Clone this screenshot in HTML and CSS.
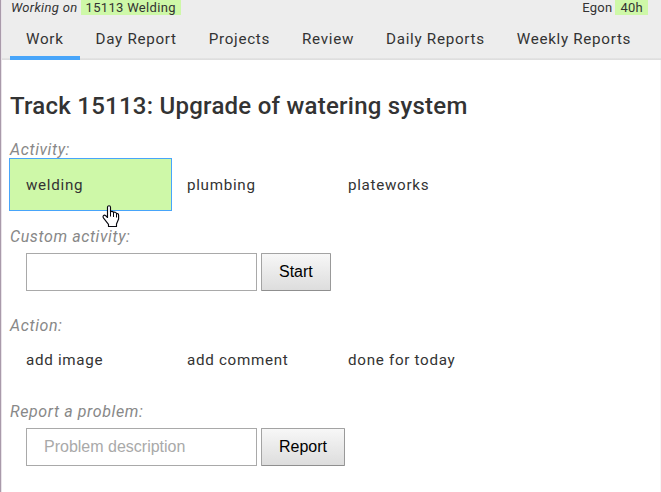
FILE: index.html
```html
<!DOCTYPE html>
<html lang="en">
<head>
<meta charset="utf-8">
<title>Track 15113</title>
<link rel="stylesheet" href="styles.css">
</head>
<body>
<div class="app">
  <header class="header">
    <div class="status">
      <div><em>Working on</em><span class="tag">15113 Welding</span></div>
      <div class="user">Egon<span class="tag">40h</span></div>
    </div>
    <nav class="tabs">
      <a class="tab active">Work</a>
      <a class="tab">Day Report</a>
      <a class="tab">Projects</a>
      <a class="tab">Review</a>
      <a class="tab">Daily Reports</a>
      <a class="tab">Weekly Reports</a>
    </nav>
  </header>
  <main class="content">
    <h1>Track 15113: Upgrade of watering system</h1>
    <section class="group activity">
      <h2>Activity:</h2>
      <div class="options">
        <a class="option selected">welding
          <svg class="cursor" width="18" height="23" viewBox="0 0 18 23">
            <path d="M5.5 12.5V2.2C5.500 .2 8.500 .2 8.500 2.200V7C9 5.900 11.400 6.200 11.500 7.600C12.300 6.800 14.300 7.300 14.500 8.700C15.500 8.100 16.600 8.900 16.600 10.200V14L14.500 19V21.500H6.500V19.300L1.600 13.200C.2 11.200 2 9.400 3.700 10.700Z" fill="#fff" stroke="#08080f" stroke-width="1.150" stroke-linejoin="round"/>
            <path d="M8.500 7V11.500M11.500 7.600V12M14.500 8.700V12.500" fill="none" stroke="#08080f"/>
          </svg>
        </a>
        <a class="option">plumbing</a>
        <a class="option">plateworks</a>
      </div>
    </section>
    <section class="group custom">
      <h2>Custom activity:</h2>
      <div class="form"><input type="text" aria-label="Custom activity"><button>Start</button></div>
    </section>
    <section class="group action">
      <h2>Action:</h2>
      <div class="options">
        <a class="option">add image</a>
        <a class="option">add comment</a>
        <a class="option">done for today</a>
      </div>
    </section>
    <section class="group problem">
      <h2>Report a problem:</h2>
      <div class="form"><input type="text" placeholder="Problem description"><button>Report</button></div>
    </section>
  </main>
</div>
</body>
</html>
```
FILE: styles.css
```css
* { box-sizing: border-box; }

body {
  margin: 0;
  background: #fff;
  color: #333;
  font-family: Roboto, "Liberation Sans", sans-serif;
}

.app {
  height: 492px;
  overflow: hidden;
  border-left: 1px solid #a99aaa;
  box-shadow: inset 1px 0 #e9e4e9, inset -1px 0 #f7f7f7;
}

.header {
  height: 60px;
  margin-left: 1px;
  padding-left: 8px;
  background: linear-gradient(#ededed 58px, #e5e5e5 58px, #dcdcdc);
}

.status {
  display: flex;
  justify-content: space-between;
  height: 18px;
  padding: 0 13px 0 1px;
  font-size: 13px;
  line-height: 15px;
  letter-spacing: 0.32px;
}

.tag {
  display: inline-block;
  height: 15px;
  margin-left: 3px;
  padding: 0 5px;
  background: #cef8a8;
}

.user { letter-spacing: 0.25px; }

.tabs { display: flex; }

.tab {
  height: 42px;
  padding: 0 16px;
  border-bottom: 4px solid transparent;
  font-size: 15.2px;
  line-height: 42px;
  letter-spacing: 0.7px;
  white-space: nowrap;
}

.tab.active { border-color: #48a5fa; }

.content { padding-left: 9px; }

h1 {
  height: 80px;
  margin: 0;
  padding-top: 31px;
  font-size: 24px;
  font-weight: 500;
  line-height: 30px;
  letter-spacing: 0.25px;
}

h2 {
  height: 18px;
  margin: 0;
  color: #888;
  font-size: 16px;
  font-style: italic;
  font-weight: 400;
  line-height: 19px;
  letter-spacing: 0.6px;
}

.activity { height: 87px; }
.custom { height: 89px; }
.action { height: 86px; }

.activity h2 { line-height: 20px; }

.options {
  display: grid;
  grid-template-columns: repeat(3, 161px);
  padding-top: 1px;
}

.action .options { padding-top: 0; }

.option {
  position: relative;
  height: 51px;
  padding-left: 16px;
  font-size: 15.2px;
  line-height: 52px;
  letter-spacing: 0.7px;
}

.option.selected {
  height: 53px;
  margin: -1px;
  border: 1px solid #48a5fa;
  background: #cef8a8;
}

.cursor {
  position: absolute;
  top: 46px;
  left: 92px;
}

.form {
  display: flex;
  gap: 4px;
  padding: 8px 0 0 16px;
}

input,
button {
  height: 38px;
  border: 1px solid #a9a9a9;
  font: 16px "Liberation Sans", sans-serif;
}

input {
  width: 231px;
  padding: 0 17px;
}

input::placeholder { color: #a9a9a9; }

button {
  padding: 0 17px;
  border-color: #a3a3a3 #999 #8f8f8f #a3a3a3;
  border-radius: 1px;
  background: linear-gradient(#f7f7f7, #ddd);
  color: #000;
}
```
